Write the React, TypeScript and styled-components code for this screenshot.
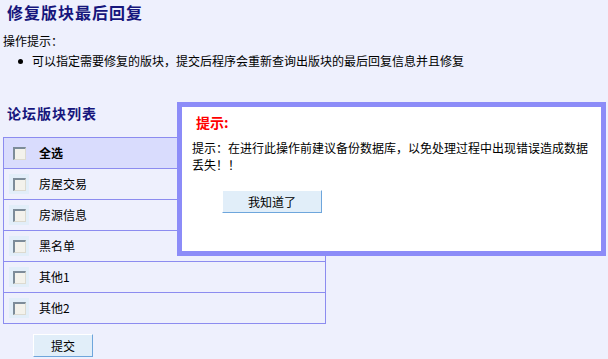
import React from "react";
import styled, { createGlobalStyle } from "styled-components";

const Global = createGlobalStyle`
  html, body { margin: 0; padding: 0; background: #eef0fd; }
  body {
    font-family: "Noto Sans CJK SC", "Liberation Sans", sans-serif;
    font-size: 12px;
    color: #000;
  }
  * { box-sizing: border-box; }
`;

const Page = styled.div`
  position: relative;
  width: 608px;
  height: 359px;
  padding: 0 0 0 3px;
  overflow: hidden;
`;

const Title = styled.h1`
  margin: 0;
  padding: 1px 0 0 4px;
  line-height: 22px;
  font-size: 16px;
  font-weight: bold;
  letter-spacing: 1px;
  color: #16167c;
`;

const HintLabel = styled.div`
  margin-top: 10px;
  line-height: 16px;
`;

const HintList = styled.ul`
  list-style: none;
  margin: 4px 0 0 0;
  padding: 0;
`;

const HintItem = styled.li`
  display: flex;
  align-items: center;
  line-height: 16px;
`;

const Dot = styled.span`
  width: 5px;
  height: 5px;
  border-radius: 50%;
  background: #000;
  margin: 0 9px 0 15px;
  flex: none;
`;

const SectionTitle = styled.h2`
  margin: 34px 0 0 0;
  padding-left: 4px;
  line-height: 20px;
  font-size: 14px;
  font-weight: bold;
  letter-spacing: 1px;
  color: #16167c;
`;

const List = styled.div`
  margin-top: 14px;
  width: 323px;
  border: 1px solid #8c8cf0;
`;

const Row = styled.div<{ $head?: boolean }>`
  display: flex;
  align-items: center;
  height: ${(p) => (p.$head ? 30 : 31)}px;
  padding: 0 5px;
  border-top: ${(p) => (p.$head ? "none" : "1px solid #8c8cf0")};
  background: ${(p) => (p.$head ? "#d9dcfd" : "transparent")};
  font-weight: ${(p) => (p.$head ? "bold" : "normal")};
`;

const CheckCell = styled.span<{ $head?: boolean }>`
  display: flex;
  width: 20px;
  height: 20px;
  padding: 4px 3px 3px 4px;
  background: ${(p) => (p.$head ? "transparent" : "#e2eef9")};
  flex: none;
`;

const Check = styled.input`
  appearance: none;
  margin: 0;
  width: 13px;
  height: 13px;
  border-style: solid;
  border-width: 2px 1px 1px 2px;
  border-color: #7d8c99 #dcdad0 #dcdad0 #7d8c99;
  background: #f3f2ec;
`;

const RowLabel = styled.span`
  margin-left: 10px;
  line-height: 16px;
`;

const Button = styled.button<{ $w: number }>`
  width: ${(p) => p.$w}px;
  height: 23px;
  padding: 0;
  background: #e1eef9;
  border-style: solid;
  border-width: 1px;
  border-color: #ffffff #6ea6dc #6ea6dc #ffffff;
  font-family: "Noto Sans CJK SC", "Liberation Sans", sans-serif;
  font-size: 12px;
  color: #000;
  line-height: 20px;
`;

const SubmitWrap = styled.div`
  margin-top: 10px;
  padding-left: 30px;
`;

const Modal = styled.div`
  position: absolute;
  left: 177px;
  top: 102px;
  width: 429px;
  height: 154px;
  border: 5px solid #8c8cf8;
  background: #fff;
  padding: 6px 10px 0 10px;
`;

const ModalTitle = styled.div`
  padding-left: 4px;
  line-height: 18px;
  font-size: 14px;
  font-weight: bold;
  color: #ff0000;
`;

const ModalText = styled.p`
  margin: 8px 0 0 0;
  line-height: 17px;
`;

const ModalActions = styled.div`
  margin-top: 17px;
  padding-left: 30px;
`;

const rows = ["房屋交易", "房源信息", "黑名单", "其他1", "其他2"];

export default function App() {
  return (
    <>
      <Global />
      <Page>
        <Title>修复版块最后回复</Title>
        <HintLabel>操作提示：</HintLabel>
        <HintList>
          <HintItem>
            <Dot />
            可以指定需要修复的版块，提交后程序会重新查询出版块的最后回复信息并且修复
          </HintItem>
        </HintList>
        <SectionTitle>论坛版块列表</SectionTitle>
        <List>
          <Row $head>
            <CheckCell $head>
              <Check type="checkbox" />
            </CheckCell>
            <RowLabel>全选</RowLabel>
          </Row>
          {rows.map((r) => (
            <Row key={r}>
              <CheckCell>
                <Check type="checkbox" />
              </CheckCell>
              <RowLabel>{r}</RowLabel>
            </Row>
          ))}
        </List>
        <SubmitWrap>
          <Button $w={60}>提交</Button>
        </SubmitWrap>
        <Modal>
          <ModalTitle>提示:</ModalTitle>
          <ModalText>
            提示：在进行此操作前建议备份数据库，以免处理过程中出现错误造成数据丢失！！
          </ModalText>
          <ModalActions>
            <Button $w={100}>我知道了</Button>
          </ModalActions>
        </Modal>
      </Page>
    </>
  );
}
